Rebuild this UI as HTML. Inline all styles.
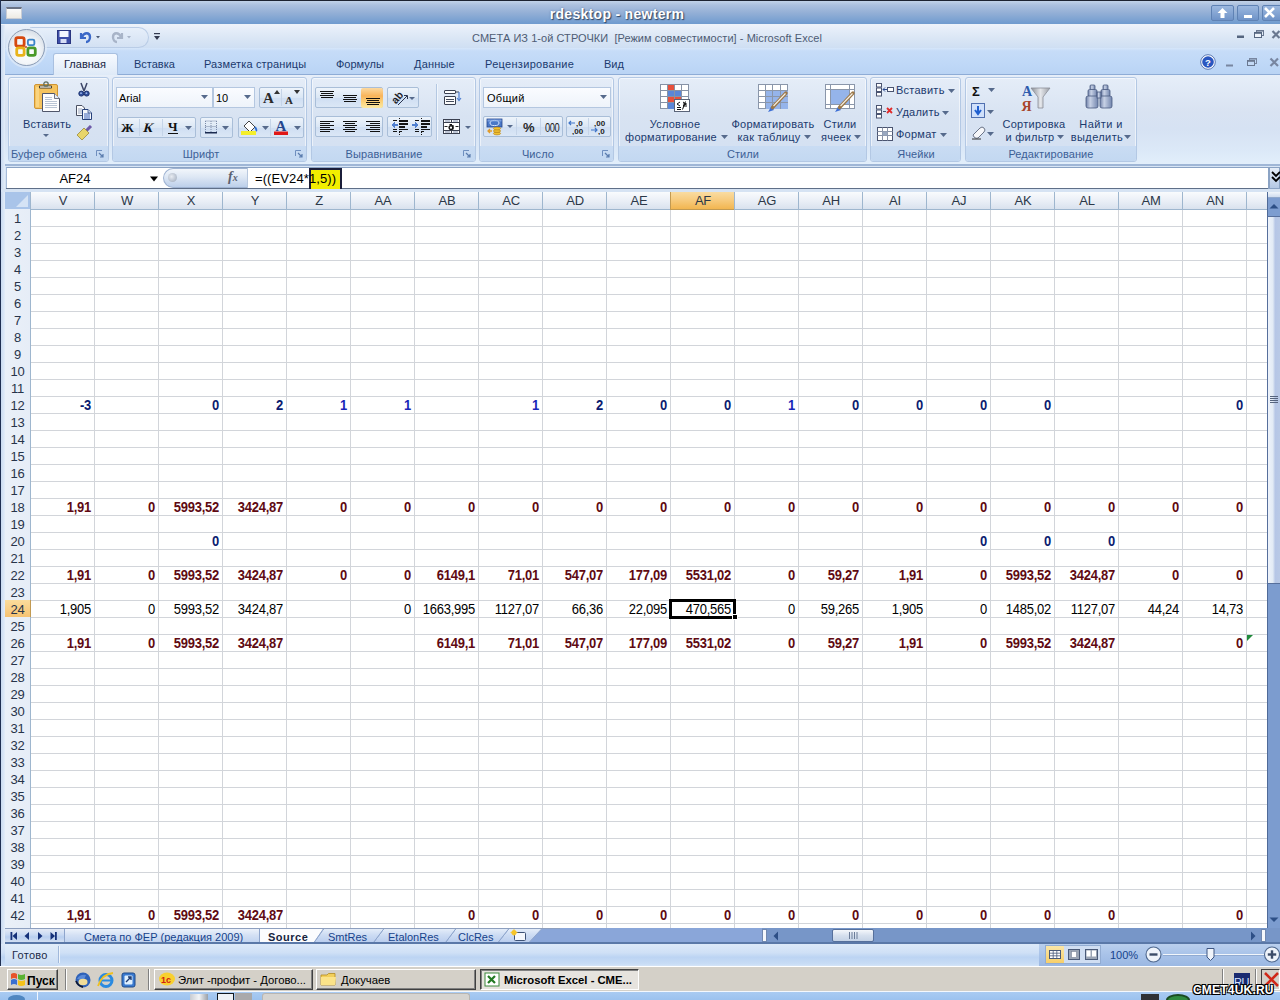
<!DOCTYPE html>
<html><head><meta charset="utf-8"><style>
*{margin:0;padding:0;box-sizing:border-box}
html,body{width:1280px;height:1000px;overflow:hidden;background:#fff;font-family:"Liberation Sans",sans-serif;position:relative}
.a{position:absolute}
.t{white-space:nowrap}
/* grid */
.vl{top:192px;width:1px;height:736px;background:#d2d5da}
.hl{left:31px;width:1236px;height:1px;background:#d2d5da}
.ch{top:192px;height:18px;background:linear-gradient(#f9fbfd,#e9eef6 55%,#d9e2ee);border-left:1px solid #9eb6ce;border-bottom:1px solid #9eb6ce;text-align:center;font-size:13px;line-height:17px;color:#2c3848;letter-spacing:-0.2px}
.ch.sel{background:linear-gradient(#f9dca2,#f7ca7c 50%,#f2b650);border-left-color:#c29a52;border-bottom-color:#c29a52}
.corner{left:5px;top:192px;width:26px;height:18px;background:#a9c4e9;border-right:1px solid #9eb6ce;border-bottom:1px solid #9eb6ce}
.corner .tri{position:absolute;right:2px;bottom:2px;width:0;height:0;border-left:12px solid transparent;border-bottom:12px solid #d5e3f5}
.rh{left:5px;width:26px;height:18px;background:linear-gradient(90deg,#eaf0f8,#e6edf7);border-right:1px solid #9eb6ce;border-bottom:1px solid #9eb6ce;text-align:center;font-size:13px;line-height:19px;color:#27344a;letter-spacing:-0.3px}
.rh.sel{background:linear-gradient(#fbdc9c,#f9d088 50%,#f6c272);border-right-color:#c29a52;border-bottom-color:#c29a52}
.cell{width:64px;height:17px;text-align:right;padding-right:3px;font-size:13px;line-height:19px;letter-spacing:-0.25px;color:#000;transform:scaleY(1.08);transform-origin:0 14px}
.cell.n{color:#0b1c70;font-weight:bold}
.cell.b{color:#1826b8;font-weight:bold}
.cell.r{color:#600a12;font-weight:bold}
.cell.k{color:#000}
.grp{top:77px;height:85px;border:1px solid #b3c8e4;border-radius:3px;background:linear-gradient(#e5edf8,#d8e3f2 45%,#d3e0f2);box-shadow:inset 0 0 0 1px rgba(255,255,255,.55)}
.glab{top:146px;height:15px;background:linear-gradient(#c9dcf3,#c3d8f1);border-radius:0 0 2px 2px}
.combo{background:linear-gradient(#fafcff,#eef3fa);border:1px solid #b4c7e0}
.btn{border:1px solid #a9bed8;border-radius:2px;background:linear-gradient(#eef4fb,#dbe7f5 50%,#cfdef2 51%,#dbe7f6)}

</style></head><body>
<!-- outer title bar -->
<div class="a" style="left:0;top:0;width:1280px;height:25px;background:linear-gradient(#1d2230 0,#1d2230 1px,#c2d2e8 1px,#acc0de 5px,#93afd6 13px,#6f9bcf 24px)"></div>
<div class="a t" style="left:317px;width:600px;text-align:center;top:7px;font-size:14px;line-height:14px;color:#fff;font-weight:bold;letter-spacing:0.3px;text-shadow:1px 1px 1px #2f4460,0 0 2px #5a78a8">rdesktop - newterm</div>
<div class="a" style="left:1211px;top:5px;width:23px;height:16px;border:1px solid #5f82b4;border-radius:2px;background:linear-gradient(#9cb8df,#6f93c8)"></div>
<div class="a" style="left:1237px;top:5px;width:22px;height:16px;border:1px solid #5f82b4;border-radius:2px;background:linear-gradient(#9cb8df,#6f93c8)"></div>
<div class="a" style="left:1262px;top:5px;width:22px;height:16px;border:1px solid #5f82b4;border-radius:2px;background:linear-gradient(#9cb8df,#6f93c8)"></div>
<svg class="a" style="left:1211px;top:5px" width="70" height="16" viewBox="0 0 70 16">
 <path d="M11.5 3 L6.5 8 H9.5 V13 H13.5 V8 H16.5 Z" fill="#fff"/>
 <rect x="33" y="10" width="8" height="3" fill="#fff"/>
 <path d="M54 3 L63 12 M63 3 L54 12" stroke="#fff" stroke-width="2.6"/>
</svg>
<!-- excel window frame -->
<div class="a" style="left:0;top:0;width:1px;height:991px;background:#1f2f52"></div>
<div class="a" style="left:1px;top:24px;width:1279px;height:24px;background:linear-gradient(#eef3fa,#e3ecf8 30%,#dae6f5 60%,#cfdff3)"></div>
<div class="a t" style="left:347px;width:600px;text-align:center;top:33px;font-size:11px;line-height:11px;color:#4e5c74;font-weight:normal;letter-spacing:0.05px;">СМЕТА ИЗ 1-ой СТРОЧКИ&nbsp; [Режим совместимости] - Microsoft Excel</div>
<!-- excel title window buttons -->
<svg class="a" style="left:1230px;top:28px" width="50" height="14" viewBox="0 0 50 14">
 <rect x="7" y="7.5" width="7" height="2.5" fill="#55657f"/>
 <rect x="26.5" y="2.5" width="7" height="5" fill="none" stroke="#6a7890" stroke-width="1"/><rect x="26" y="2" width="8" height="1.6" fill="#6a7890"/>
 <rect x="24.5" y="4.5" width="7" height="5" fill="#eef3fa" stroke="#55657f" stroke-width="1"/><rect x="24" y="4" width="8" height="1.8" fill="#55657f"/>
 <path d="M42.5 3 L49.5 10 M49.5 3 L42.5 10" stroke="#6a7890" stroke-width="2.2"/>
</svg>
<!-- tab row -->
<div class="a" style="left:1px;top:48px;width:1279px;height:27px;background:linear-gradient(#d6e6fa 0,#c6dcf8 3px,#bfd8f7 60%,#b9d3f4)"></div>
<div class="a" style="left:1px;top:74px;width:1279px;height:1px;background:#8eacd6"></div>
<!-- QAT -->
<div class="a" style="left:30px;top:27px;width:119px;height:21px;border-radius:0 11px 11px 0;background:linear-gradient(#e7effa,#d3e1f3);border:1px solid #b9cce6;border-left:none"></div>
<!-- office button -->
<div class="a" style="left:8px;top:29px;width:37px;height:37px;border-radius:50%;background:radial-gradient(circle at 50% 60%,#ffffff 0,#f3f6f9 45%,#d6dde6 80%,#b9c4d2 100%);border:1px solid #8d9db5;box-shadow:0 0 0 2px rgba(230,238,248,.6)"></div>
<svg class="a" style="left:13px;top:34px" width="26" height="26" viewBox="0 0 28 28">
 <rect x="3" y="4" width="9" height="9" rx="2" fill="none" stroke="#d5480f" stroke-width="3"/>
 <rect x="4" y="15" width="8" height="8" rx="2" fill="none" stroke="#e8b31a" stroke-width="3"/>
 <rect x="16" y="15" width="8" height="8" rx="2" fill="none" stroke="#4a9a2a" stroke-width="3"/>
 <rect x="16" y="6" width="7" height="6" rx="1.5" fill="none" stroke="#3c85c8" stroke-width="2"/>
 <circle cx="14" cy="14" r="1.2" fill="#c05030"/>
</svg>
<!-- save -->
<svg class="a" style="left:57px;top:30px" width="14" height="15" viewBox="0 0 14 15">
 <rect x="0.5" y="0.5" width="13" height="13" fill="#3e4ea8" stroke="#2a3580"/>
 <rect x="2.5" y="1" width="9" height="6" fill="#f4f6ff"/>
 <rect x="3.5" y="9" width="6" height="4" fill="#d8def5"/>
</svg>
<!-- undo -->
<svg class="a" style="left:78px;top:30px" width="24" height="14" viewBox="0 0 24 14">
 <path d="M3 3 V8 H8" fill="none" stroke="#3a68c8" stroke-width="2.2"/>
 <path d="M4 7 C6 2, 12 2, 12 7 C12 10, 10 12, 8 12" fill="none" stroke="#3a68c8" stroke-width="2.4"/>
 <path d="M18 6 L22 6 L20 8.5 Z" fill="#4a5a78"/>
</svg>
<svg class="a" style="left:110px;top:30px" width="24" height="14" viewBox="0 0 24 14">
 <path d="M12 3 V8 H7" fill="none" stroke="#a8b4c8" stroke-width="2.2"/>
 <path d="M11 7 C9 2, 3 2, 3 7 C3 10, 5 12, 7 12" fill="none" stroke="#a8b4c8" stroke-width="2.4"/>
 <path d="M17 6 L21 6 L19 8.5 Z" fill="#a8b4c8"/>
</svg>
<svg class="a" style="left:153px;top:32px" width="8" height="10" viewBox="0 0 8 10">
 <rect x="1" y="1" width="6" height="1.2" fill="#333a50"/>
 <path d="M1 4 L7 4 L4 8 Z" fill="#333a50"/>
</svg>
<!-- active tab -->
<div class="a" style="left:53px;top:53px;width:65px;height:23px;border:1px solid #a9c0e0;border-bottom:none;border-radius:3px 3px 0 0;background:linear-gradient(#f7faff,#e8f0fa 60%,#dde9f7)"></div>
<div class="a t" style="left:64px;top:59px;font-size:11px;line-height:11px;color:#15233e;font-weight:normal;letter-spacing:0px;">Главная</div>
<div class="a t" style="left:134px;top:59px;font-size:11px;line-height:11px;color:#1b3a6e;font-weight:normal;letter-spacing:0px;">Вставка</div>
<div class="a t" style="left:204px;top:59px;font-size:11px;line-height:11px;color:#1b3a6e;font-weight:normal;letter-spacing:0.15px;">Разметка страницы</div>
<div class="a t" style="left:336px;top:59px;font-size:11px;line-height:11px;color:#1b3a6e;font-weight:normal;letter-spacing:0px;">Формулы</div>
<div class="a t" style="left:414px;top:59px;font-size:11px;line-height:11px;color:#1b3a6e;font-weight:normal;letter-spacing:0.2px;">Данные</div>
<div class="a t" style="left:485px;top:59px;font-size:11px;line-height:11px;color:#1b3a6e;font-weight:normal;letter-spacing:0.3px;">Рецензирование</div>
<div class="a t" style="left:604px;top:59px;font-size:11px;line-height:11px;color:#1b3a6e;font-weight:normal;letter-spacing:0px;">Вид</div>
<!-- tab row right buttons -->
<svg class="a" style="left:1199px;top:53px" width="81" height="18" viewBox="0 0 81 18">
 <circle cx="9" cy="9" r="7.3" fill="#fff" stroke="#3a5aa0" stroke-width=".8"/>
 <circle cx="9" cy="9" r="5.8" fill="#2a56c0"/>
 <text x="9" y="12.6" font-size="9.5" font-weight="bold" fill="#fff" text-anchor="middle" font-family="Liberation Sans">?</text>
 <rect x="27" y="11.5" width="7" height="2" fill="#7886a0"/>
 <rect x="50.5" y="5.5" width="7" height="5" fill="none" stroke="#7886a0" stroke-width="1"/><rect x="50" y="5" width="8" height="1.6" fill="#7886a0"/>
 <rect x="48.5" y="7.5" width="7" height="5" fill="#c4daf6" stroke="#6a7890" stroke-width="1"/><rect x="48" y="7" width="8" height="1.8" fill="#6a7890"/>
 <path d="M71.5 5.5 L79 13 M79 5.5 L71.5 13" stroke="#7886a0" stroke-width="2.2"/>
</svg>
<!-- ribbon body -->
<div class="a" style="left:1px;top:75px;width:1279px;height:90px;background:linear-gradient(#e6eef9,#d9e3f2 40%,#d6e2f3 60%,#dce9f8 85%,#e3effb)"></div>
<div class="a" style="left:1px;top:164px;width:1279px;height:2px;background:#9fb6d6"></div>
<!-- groups -->
<div class="a grp" style="left:8px;width:101px"></div><div class="a glab" style="left:9px;width:99px"></div>
<div class="a grp" style="left:112px;width:195px"></div><div class="a glab" style="left:113px;width:193px"></div>
<div class="a grp" style="left:311px;width:165px"></div><div class="a glab" style="left:312px;width:163px"></div>
<div class="a grp" style="left:479px;width:135px"></div><div class="a glab" style="left:480px;width:133px"></div>
<div class="a grp" style="left:618px;width:249px"></div><div class="a glab" style="left:619px;width:247px"></div>
<div class="a grp" style="left:870px;width:91px"></div><div class="a glab" style="left:871px;width:89px"></div>
<div class="a grp" style="left:965px;width:172px"></div><div class="a glab" style="left:966px;width:170px"></div>
<div class="a t" style="left:-251px;width:600px;text-align:center;top:149px;font-size:11px;line-height:11px;color:#3c5f96;font-weight:normal;letter-spacing:0.1px;">Буфер обмена</div>
<div class="a t" style="left:-99px;width:600px;text-align:center;top:149px;font-size:11px;line-height:11px;color:#3c5f96;font-weight:normal;letter-spacing:0.1px;">Шрифт</div>
<div class="a t" style="left:84px;width:600px;text-align:center;top:149px;font-size:11px;line-height:11px;color:#3c5f96;font-weight:normal;letter-spacing:0.1px;">Выравнивание</div>
<div class="a t" style="left:238px;width:600px;text-align:center;top:149px;font-size:11px;line-height:11px;color:#3c5f96;font-weight:normal;letter-spacing:0.1px;">Число</div>
<div class="a t" style="left:443px;width:600px;text-align:center;top:149px;font-size:11px;line-height:11px;color:#3c5f96;font-weight:normal;letter-spacing:0.1px;">Стили</div>
<div class="a t" style="left:616px;width:600px;text-align:center;top:149px;font-size:11px;line-height:11px;color:#3c5f96;font-weight:normal;letter-spacing:0.1px;">Ячейки</div>
<div class="a t" style="left:751px;width:600px;text-align:center;top:149px;font-size:11px;line-height:11px;color:#3c5f96;font-weight:normal;letter-spacing:0.1px;">Редактирование</div>
<!-- launcher icons -->
<svg class="a" style="left:95px;top:149px" width="10" height="10" viewBox="0 0 10 10"><path d="M1.5 7 V1.5 H7" fill="none" stroke="#6f8fbf" stroke-width="1"/><path d="M4 4 L8 8 M8 5 V8 H5" fill="none" stroke="#5a7cae" stroke-width="1.2"/></svg>
<svg class="a" style="left:294px;top:149px" width="10" height="10" viewBox="0 0 10 10"><path d="M1.5 7 V1.5 H7" fill="none" stroke="#6f8fbf" stroke-width="1"/><path d="M4 4 L8 8 M8 5 V8 H5" fill="none" stroke="#5a7cae" stroke-width="1.2"/></svg>
<svg class="a" style="left:462px;top:149px" width="10" height="10" viewBox="0 0 10 10"><path d="M1.5 7 V1.5 H7" fill="none" stroke="#6f8fbf" stroke-width="1"/><path d="M4 4 L8 8 M8 5 V8 H5" fill="none" stroke="#5a7cae" stroke-width="1.2"/></svg>
<svg class="a" style="left:601px;top:149px" width="10" height="10" viewBox="0 0 10 10"><path d="M1.5 7 V1.5 H7" fill="none" stroke="#6f8fbf" stroke-width="1"/><path d="M4 4 L8 8 M8 5 V8 H5" fill="none" stroke="#5a7cae" stroke-width="1.2"/></svg>

<!-- CLIPBOARD -->
<svg class="a" style="left:28px;top:78px" width="70" height="66" viewBox="0 0 70 66">
 <rect x="6.5" y="6.5" width="23" height="24" rx="1.5" fill="#f5c35e" stroke="#cf9434" stroke-width="1"/>
 <rect x="8" y="9" width="3" height="20" fill="#fbd888" opacity=".8"/>
 <rect x="11" y="7.5" width="13" height="3" rx="1" fill="#3e3a30"/>
 <rect x="12" y="8.3" width="11" height="1.4" fill="#e8e4d8"/>
 <circle cx="18" cy="6" r="2.2" fill="none" stroke="#607060" stroke-width="1.3"/>
 <path d="M14.5 15.5 H26.5 L31.5 20.5 V33.5 H14.5 Z" fill="#fdfdfe" stroke="#50566a" stroke-width="1"/>
 <path d="M26.5 15.5 V20.5 H31.5" fill="#e8ecf2" stroke="#50566a" stroke-width=".8"/>
 <path d="M17 19.5 H24 M17 21.5 H24 M17 23.5 H29 M17 25.5 H29 M17 27.5 H29 M17 29.5 H29" stroke="#b9c4d4" stroke-width="1"/>
</svg>
<div class="a t" style="left:-253px;width:600px;text-align:center;top:119px;font-size:11px;line-height:11px;color:#1b3a6e;font-weight:normal;letter-spacing:0.2px;">Вставить</div>
<svg class="a" style="left:42px;top:133px" width="8" height="5" viewBox="0 0 8 5"><path d="M1 1 H7 L4 4 Z" fill="#566a8c"/></svg>
<svg class="a" style="left:77px;top:82px" width="14" height="16" viewBox="0 0 14 16">
 <path d="M4 1 L7 9 M10 1 L7 9" stroke="#3c4668" stroke-width="1.5"/>
 <circle cx="4.3" cy="11.6" r="2.5" fill="#2f4f9e" stroke="#1f3470" stroke-width="1"/>
 <circle cx="9.7" cy="11.6" r="2.5" fill="#2f4f9e" stroke="#1f3470" stroke-width="1"/>
 <circle cx="4" cy="11.2" r=".9" fill="#9fb8ea"/><circle cx="9.4" cy="11.2" r=".9" fill="#9fb8ea"/>
</svg>
<svg class="a" style="left:76px;top:104px" width="17" height="16" viewBox="0 0 17 16">
 <path d="M0.5 1.5 H6 L8.5 4 V11.5 H0.5 Z" fill="#fbfcfe" stroke="#4a5062" stroke-width="1"/>
 <path d="M2 5 H6 M2 7 H6 M2 9 H6" stroke="#9aa6bc" stroke-width="1"/>
 <path d="M6.5 5.5 H12 L15.5 9 V15.5 H6.5 Z" fill="#f4f7fc" stroke="#26407a" stroke-width="1"/>
 <path d="M8 10 H14 M8 12 H14 M8 14 H14" stroke="#3a62b8" stroke-width="1.1"/>
 <path d="M12 5.5 V9 H15.5" fill="#c8d6f0" stroke="#26407a" stroke-width=".7"/>
</svg>
<svg class="a" style="left:75px;top:125px" width="18" height="16" viewBox="0 0 18 16">
 <path d="M11 6 L16 1" stroke="#6d5aa8" stroke-width="3"/>
 <path d="M2 10 L9 3 L14 8 L7 15 Z" fill="#e8d56a" stroke="#9a8a3a" stroke-width="0.8"/>
</svg>

<!-- FONT -->
<div class="a combo" style="left:116px;top:87px;width:97px;height:21px"></div>
<div class="a t" style="left:119px;top:93px;font-size:11px;line-height:11px;color:#000;font-weight:normal;letter-spacing:0px;">Arial</div>
<svg class="a" style="left:201px;top:95px" width="7" height="4" viewBox="0 0 7 4"><path d="M0 0 H7 L3.5 4 Z" fill="#566a8c"/></svg>
<div class="a combo" style="left:213px;top:87px;width:42px;height:21px"></div>
<div class="a t" style="left:216px;top:93px;font-size:11px;line-height:11px;color:#000;font-weight:normal;letter-spacing:0px;">10</div>
<svg class="a" style="left:244px;top:95px" width="7" height="4" viewBox="0 0 7 4"><path d="M0 0 H7 L3.5 4 Z" fill="#566a8c"/></svg>
<div class="a btn" style="left:259px;top:87px;width:45px;height:21px"></div>
<div class="a" style="left:281px;top:89px;width:1px;height:17px;background:#c5d4e8"></div>
<div class="a t" style="left:263px;top:91px;font-size:15px;line-height:15px;color:#2a2a2a;font-weight:bold;letter-spacing:0px;font-family:'Liberation Serif',serif">A</div>
<svg class="a" style="left:274px;top:90px" width="6" height="4" viewBox="0 0 6 4"><path d="M0 4 L3 0 L6 4 Z" fill="#333"/></svg>
<div class="a t" style="left:285px;top:95px;font-size:11px;line-height:11px;color:#2a2a2a;font-weight:bold;letter-spacing:0px;font-family:'Liberation Serif',serif">A</div>
<svg class="a" style="left:294px;top:90px" width="6" height="4" viewBox="0 0 6 4"><path d="M0 0 H6 L3 4 Z" fill="#333"/></svg>

<div class="a btn" style="left:117px;top:117px;width:79px;height:21px"></div>
<div class="a" style="left:139px;top:119px;width:1px;height:17px;background:#c5d4e8"></div>
<div class="a" style="left:162px;top:119px;width:1px;height:17px;background:#c5d4e8"></div>
<div class="a t" style="left:121px;top:121px;font-size:13px;line-height:13px;color:#111;font-weight:bold;letter-spacing:0px;font-family:'Liberation Serif',serif">Ж</div>
<div class="a t" style="left:144px;top:121px;font-size:13px;line-height:13px;color:#111;font-weight:bold;letter-spacing:0px;font-family:'Liberation Serif',serif;transform:skewX(-15deg)">К</div>
<div class="a t" style="left:168px;top:120px;font-size:13px;line-height:13px;color:#111;font-weight:bold;letter-spacing:0px;font-family:'Liberation Serif',serif">Ч</div>
<div class="a" style="left:168px;top:133px;width:10px;height:1px;background:#111"></div>
<svg class="a" style="left:185px;top:126px" width="7" height="4" viewBox="0 0 7 4"><path d="M0 0 H7 L3.5 4 Z" fill="#566a8c"/></svg>
<div class="a btn" style="left:200px;top:117px;width:33px;height:21px"></div>
<svg class="a" style="left:204px;top:119px" width="14" height="16" viewBox="0 0 14 16">
 <path d="M1.5 2 V13 M12.5 2 V13 M1.5 2 H12.5 M1.5 7.5 H12.5 M7 2 V13" stroke="#7a8aa8" stroke-width="1" stroke-dasharray="1 1"/>
 <rect x="1" y="13" width="12" height="1.5" fill="#1a2a50"/>
</svg>
<svg class="a" style="left:222px;top:126px" width="7" height="4" viewBox="0 0 7 4"><path d="M0 0 H7 L3.5 4 Z" fill="#566a8c"/></svg>
<div class="a btn" style="left:238px;top:117px;width:66px;height:21px"></div>
<div class="a" style="left:270px;top:119px;width:1px;height:17px;background:#c5d4e8"></div>
<svg class="a" style="left:240px;top:118px" width="20" height="18" viewBox="0 0 20 18">
 <path d="M4 8 L9 3 L15 9 L10 14 Z" fill="#fff" stroke="#444" stroke-width="1"/>
 <path d="M15 9 Q17 12 16 13" stroke="#2f6fd0" stroke-width="2" fill="none"/>
 <rect x="1" y="13" width="15" height="4" fill="#f4ee2a"/>
</svg>
<svg class="a" style="left:262px;top:126px" width="7" height="4" viewBox="0 0 7 4"><path d="M0 0 H7 L3.5 4 Z" fill="#566a8c"/></svg>
<svg class="a" style="left:273px;top:118px" width="16" height="18" viewBox="0 0 16 18">
 <text x="8" y="12.5" font-size="15" font-weight="bold" fill="#26478e" text-anchor="middle" font-family="Liberation Serif">A</text>
 <rect x="1" y="13.5" width="14" height="3.5" fill="#e01818"/>
</svg>
<svg class="a" style="left:294px;top:126px" width="7" height="4" viewBox="0 0 7 4"><path d="M0 0 H7 L3.5 4 Z" fill="#566a8c"/></svg>

<!-- ALIGNMENT -->
<div class="a btn" style="left:315px;top:87px;width:68px;height:21px"></div>
<div class="a" style="left:361px;top:88px;width:22px;height:20px;background:linear-gradient(#fcd9a0,#f9b45a 40%,#fbd27c 70%,#fbe9a4);border-radius:2px"></div>
<svg class="a" style="left:314px;top:85px" width="70" height="55" viewBox="0 0 70 55" shape-rendering="crispEdges">
 <g fill="#111">
 <rect x="6" y="6" width="14" height="1"/><rect x="7" y="8" width="12" height="1"/><rect x="6" y="10" width="14" height="1"/><rect x="7" y="12" width="12" height="1"/>
 <rect x="29" y="10" width="14" height="1"/><rect x="30" y="12" width="12" height="1"/><rect x="29" y="14" width="14" height="1"/><rect x="30" y="16" width="12" height="1"/>
 <rect x="52" y="13" width="14" height="1"/><rect x="53" y="15" width="12" height="1"/><rect x="52" y="17" width="14" height="1"/><rect x="53" y="19" width="12" height="1"/>
 </g></svg>
<div class="a btn" style="left:387px;top:87px;width:32px;height:21px"></div>
<svg class="a" style="left:389px;top:89px" width="28" height="17" viewBox="0 0 28 17">
 <g transform="rotate(-50 8 8)"><text x="1.5" y="12" font-size="10.5" font-weight="bold" fill="#1e1e28" font-family="Liberation Sans">ab</text></g>
 <path d="M9 16 L18 7" stroke="#2a3450" stroke-width="1"/><path d="M15 6.5 L18.5 6.5 L18.5 10" fill="none" stroke="#2a3450" stroke-width="1"/>
 <path d="M20 8 H26 L23 11 Z" fill="#566a8c"/>
</svg>
<div class="a btn" style="left:315px;top:116px;width:68px;height:21px"></div>
<svg class="a" style="left:314px;top:85px" width="70" height="55" viewBox="0 0 70 55" shape-rendering="crispEdges">
 <g fill="#111">
 <rect x="6" y="36" width="14" height="1"/><rect x="6" y="38" width="10" height="1"/><rect x="6" y="40" width="14" height="1"/><rect x="6" y="42" width="10" height="1"/><rect x="6" y="44" width="14" height="1"/><rect x="6" y="46" width="10" height="1"/>
 <rect x="29" y="36" width="14" height="1"/><rect x="31" y="38" width="10" height="1"/><rect x="29" y="40" width="14" height="1"/><rect x="31" y="42" width="10" height="1"/><rect x="29" y="44" width="14" height="1"/><rect x="31" y="46" width="10" height="1"/>
 <rect x="52" y="36" width="14" height="1"/><rect x="56" y="38" width="10" height="1"/><rect x="52" y="40" width="14" height="1"/><rect x="56" y="42" width="10" height="1"/><rect x="52" y="44" width="14" height="1"/><rect x="56" y="46" width="10" height="1"/>
 </g></svg>
<div class="a btn" style="left:387px;top:116px;width:45px;height:21px"></div>
<svg class="a" style="left:388px;top:117px" width="44" height="19" viewBox="0 0 44 19" shape-rendering="crispEdges">
 <g fill="#141414"><rect x="11" y="1" width="1" height="1"/><rect x="11" y="17" width="1" height="1"/>
  <rect x="5" y="3" width="4" height="1"/><rect x="11" y="3" width="9" height="2"/>
  <rect x="11" y="6" width="9" height="2"/><rect x="11" y="9" width="6" height="2"/>
  <rect x="11" y="12" width="9" height="1"/><rect x="5" y="12" width="4" height="1"/>
  <rect x="5" y="14" width="4" height="1"/><rect x="11" y="14" width="3" height="1"/>
  <rect x="11" y="15" width="1" height="1"/><rect x="33" y="1" width="1" height="1"/><rect x="33" y="17" width="1" height="1"/>
  <rect x="27" y="3" width="4" height="1"/><rect x="33" y="3" width="9" height="2"/>
  <rect x="33" y="6" width="9" height="2"/><rect x="33" y="9" width="6" height="2"/>
  <rect x="33" y="12" width="9" height="1"/><rect x="27" y="12" width="4" height="1"/>
  <rect x="27" y="14" width="4" height="1"/><rect x="33" y="14" width="3" height="1"/>
  <rect x="33" y="15" width="1" height="1"/></g>
 <path d="M3 8 L7 5 V11 Z" fill="#4f7fd0"/><rect x="6" y="7" width="4" height="2" fill="#4f7fd0"/>
 <path d="M31 8 L27 5 V11 Z" fill="#4f7fd0"/><rect x="24" y="7" width="4" height="2" fill="#4f7fd0"/>
</svg>
<div class="a" style="left:436px;top:84px;width:1px;height:56px;background:#b4c8e2"></div>
<div class="a" style="left:437px;top:84px;width:1px;height:56px;background:#f0f6fd"></div>
<svg class="a" style="left:442px;top:88px" width="20" height="19" viewBox="0 0 20 19">
 <rect x="2.5" y="2.5" width="11" height="3" rx=".5" fill="#fff" stroke="#3a4050"/>
 <rect x="2.5" y="8.5" width="11" height="8" rx=".5" fill="#fbfbfb" stroke="#3a4050"/>
 <path d="M4 11.5 H12 M4 13.5 H12" stroke="#444c5c"/>
 <path d="M13.5 4 H17" stroke="#3a4050"/>
 <path d="M17 4 V12" stroke="#4f7fd0" stroke-width="1.2"/><path d="M15 10 L17 12.5 L19 10" stroke="#4f7fd0" fill="none" stroke-width="1.2"/>
</svg>
<svg class="a" style="left:442px;top:118px" width="30" height="18" viewBox="0 0 30 18">
 <rect x="1.5" y="1.5" width="16" height="14" fill="#fff" stroke="#3a4050"/>
 <path d="M1.5 4.5 H17.5 M1.5 12.5 H17.5 M9.5 1.5 V4.5 M9.5 12.5 V15.5" stroke="#3a4050"/>
 <path d="M3 3 H8 M11 3 H16 M3 14 H8 M11 14 H16" stroke="#8090b0"/>
 <circle cx="9" cy="9.6" r="1.9" fill="none" stroke="#111" stroke-width="1.4"/><path d="M10.9 7 V11.5 M7.5 6.6 H10" stroke="#111" stroke-width="1.3"/>
 <path d="M2.5 8.5 H5.5 M13.5 8.5 H16.5" stroke="#222" stroke-width="1.2"/>
 <path d="M23 8 H29 L26 11 Z" fill="#566a8c"/>
</svg>

<!-- NUMBER -->
<div class="a combo" style="left:483px;top:87px;width:128px;height:21px"></div>
<div class="a t" style="left:487px;top:93px;font-size:11px;line-height:11px;color:#000;font-weight:normal;letter-spacing:0.3px;">Общий</div>
<svg class="a" style="left:600px;top:95px" width="7" height="4" viewBox="0 0 7 4"><path d="M0 0 H7 L3.5 4 Z" fill="#566a8c"/></svg>
<div class="a btn" style="left:483px;top:116px;width:80px;height:21px"></div>
<div class="a" style="left:516px;top:118px;width:1px;height:17px;background:#c5d4e8"></div>
<div class="a" style="left:540px;top:118px;width:1px;height:17px;background:#c5d4e8"></div>
<svg class="a" style="left:486px;top:118px" width="30" height="18" viewBox="0 0 30 18">
 <rect x="1" y="1" width="15" height="8" fill="#4a78c8" stroke="#26468a" stroke-width=".8"/>
 <ellipse cx="8.5" cy="5" rx="4.5" ry="2.6" fill="none" stroke="#d8e6ff" stroke-width="1"/>
 <rect x="1.5" y="1.5" width="14" height="2" fill="#8fb0e8" opacity=".7"/>
 <g fill="#f2c232" stroke="#b07a10" stroke-width=".6">
 <ellipse cx="11" cy="15.5" rx="3.6" ry="1.4"/><ellipse cx="11" cy="13" rx="3.6" ry="1.4"/><ellipse cx="11" cy="10.5" rx="3.6" ry="1.4"/>
 </g>
 <path d="M2 13 H6 M4 11 L2 13 L4 15" stroke="#e09a28" stroke-width="1.3" fill="none"/>
 <path d="M21 7 H27 L24 10 Z" fill="#566a8c"/>
</svg>
<div class="a t" style="left:523px;top:121px;font-size:13px;line-height:13px;color:#2a2a2a;font-weight:normal;letter-spacing:0px;font-weight:600">%</div>
<div class="a t" style="left:545px;top:123px;font-size:11px;line-height:11px;color:#222;font-weight:normal;letter-spacing:-0.6px;transform:scale(0.85,1.15);transform-origin:0 100%">000</div>
<div class="a btn" style="left:566px;top:116px;width:45px;height:21px"></div>
<div class="a" style="left:588px;top:118px;width:1px;height:17px;background:#c5d4e8"></div>
<svg class="a" style="left:568px;top:118px" width="42" height="17" viewBox="0 0 42 17">
 <text x="8" y="8" font-size="8" font-weight="bold" fill="#222" font-family="Liberation Sans">,0</text>
 <text x="4" y="16" font-size="8" font-weight="bold" fill="#222" font-family="Liberation Sans">,00</text>
 <path d="M1 5 H7 M3 3 L1 5 L3 7" stroke="#3f74c8" stroke-width="1.2" fill="none"/>
 <text x="26" y="8" font-size="8" font-weight="bold" fill="#222" font-family="Liberation Sans">,00</text>
 <text x="30" y="16" font-size="8" font-weight="bold" fill="#222" font-family="Liberation Sans">,0</text>
 <path d="M23 12 H29 M27 10 L29 12 L27 14" stroke="#3f74c8" stroke-width="1.2" fill="none"/>
</svg>

<!-- STYLES -->
<svg class="a" style="left:660px;top:84px" width="32" height="30" viewBox="0 0 32 30" shape-rendering="crispEdges">
 <rect x="0.5" y="0.5" width="28" height="24" fill="#fff" stroke="#8792a6"/>
 <rect x="7.5" y="0.5" width="7" height="6" fill="#e8503c"/>
 <rect x="7.5" y="6.5" width="14" height="6" fill="#5a86d8"/>
 <rect x="7.5" y="12.5" width="14" height="6" fill="#e8503c"/>
 <rect x="7.5" y="18.5" width="7" height="6" fill="#5a86d8"/>
 <path d="M0.5 6.5 H28.5 M0.5 12.5 H28.5 M0.5 18.5 H28.5 M7.5 0.5 V24.5 M14.5 0.5 V24.5 M21.5 0.5 V24.5" stroke="#8792a6" fill="none"/>
 <rect x="14.5" y="15.5" width="15" height="12" fill="#fff" stroke="#5a6478"/>
 <path d="M20 18 L17 20 L20 22 M17 23.5 H21 M17 25.5 H21 M23 18 L26 20 L23 22 M22.5 25.5 L25.5 17.5 M23 20 H27 M23 22 H27" stroke="#111" stroke-width="1" fill="none" shape-rendering="auto"/>
</svg>
<div class="a t" style="left:375px;width:600px;text-align:center;top:119px;font-size:11px;line-height:11px;color:#1b3a6e;font-weight:normal;letter-spacing:0.25px;">Условное</div>
<div class="a t" style="left:371px;width:600px;text-align:center;top:132px;font-size:11px;line-height:11px;color:#1b3a6e;font-weight:normal;letter-spacing:0.25px;">форматирование</div>
<svg class="a" style="left:721px;top:135px" width="7" height="4" viewBox="0 0 7 4"><path d="M0 0 H7 L3.5 4 Z" fill="#566a8c"/></svg>
<svg class="a" style="left:758px;top:84px" width="34" height="30" viewBox="0 0 34 30">
 <g shape-rendering="crispEdges">
 <rect x="0.5" y="0.5" width="29" height="24" fill="#fff" stroke="#8a96aa"/>
 <rect x="7.5" y="6.5" width="22" height="18" fill="#95b4ea"/>
 <path d="M0.5 6.5 H29.5 M0.5 12.5 H29.5 M0.5 18.5 H29.5 M7.5 0.5 V24.5 M14.5 0.5 V24.5 M22.5 0.5 V24.5" stroke="#8a96aa" fill="none"/>
 </g>
 <path d="M10 28 L13 23 L16 26 Z" fill="#3d6fd6"/><path d="M12.5 24 Q14 21 17 22 L15.5 25.5 Z" fill="#4a7ad8"/>
 <path d="M14.5 23.5 L28 9" stroke="#9c7848" stroke-width="3.4" stroke-linecap="round"/>
 <path d="M15.5 22 L27.5 9.5" stroke="#f4f0e8" stroke-width="1.1"/>
</svg>
<div class="a t" style="left:473px;width:600px;text-align:center;top:119px;font-size:11px;line-height:11px;color:#1b3a6e;font-weight:normal;letter-spacing:0.25px;">Форматировать</div>
<div class="a t" style="left:469px;width:600px;text-align:center;top:132px;font-size:11px;line-height:11px;color:#1b3a6e;font-weight:normal;letter-spacing:0.25px;">как таблицу</div>
<svg class="a" style="left:804px;top:135px" width="7" height="4" viewBox="0 0 7 4"><path d="M0 0 H7 L3.5 4 Z" fill="#566a8c"/></svg>
<svg class="a" style="left:825px;top:84px" width="34" height="30" viewBox="0 0 34 30">
 <g shape-rendering="crispEdges">
 <rect x="0.5" y="0.5" width="29" height="24" fill="#fff" stroke="#8a96aa"/>
 <rect x="5.5" y="5.5" width="19" height="15" fill="#95b4ea" stroke="#8a96aa"/>
 <path d="M0.5 5.5 H5.5 M24.5 5.5 H29.5 M0.5 20.5 H5.5 M24.5 20.5 H29.5 M5.5 0.5 V5.5 M24.5 0.5 V5.5 M5.5 20.5 V24.5 M24.5 20.5 V24.5" stroke="#8a96aa"/>
 </g>
 <path d="M10 28 L13 23 L16 26 Z" fill="#3d6fd6"/><path d="M12.5 24 Q14 21 17 22 L15.5 25.5 Z" fill="#4a7ad8"/>
 <path d="M14.5 23.5 L28 9" stroke="#9c7848" stroke-width="3.4" stroke-linecap="round"/>
 <path d="M15.5 22 L27.5 9.5" stroke="#f4f0e8" stroke-width="1.1"/>
</svg>
<div class="a t" style="left:540px;width:600px;text-align:center;top:119px;font-size:11px;line-height:11px;color:#1b3a6e;font-weight:normal;letter-spacing:0.25px;">Стили</div>
<div class="a t" style="left:536px;width:600px;text-align:center;top:132px;font-size:11px;line-height:11px;color:#1b3a6e;font-weight:normal;letter-spacing:0.25px;">ячеек</div>
<svg class="a" style="left:854px;top:135px" width="7" height="4" viewBox="0 0 7 4"><path d="M0 0 H7 L3.5 4 Z" fill="#566a8c"/></svg>

<!-- CELLS -->
<svg class="a" style="left:875px;top:82px" width="20" height="16" viewBox="0 0 20 16">
 <rect x="1.5" y="1.5" width="5" height="3.5" fill="#fff" stroke="#4a5470"/>
 <rect x="1.5" y="6" width="5" height="3.5" fill="#fff" stroke="#4a5470"/>
 <rect x="1.5" y="10.5" width="5" height="3.5" fill="#fff" stroke="#4a5470"/>
 <path d="M8 7.5 H12 M10 5.5 L8 7.5 L10 9.5" stroke="#2a4a90" fill="none"/>
 <rect x="12.5" y="5.5" width="6" height="4" fill="#fff" stroke="#4a5470"/>
</svg>
<div class="a t" style="left:896px;top:85px;font-size:11px;line-height:11px;color:#1b3a6e;font-weight:normal;letter-spacing:0.25px;">Вставить</div>
<svg class="a" style="left:948px;top:89px" width="7" height="4" viewBox="0 0 7 4"><path d="M0 0 H7 L3.5 4 Z" fill="#566a8c"/></svg>
<svg class="a" style="left:875px;top:104px" width="20" height="16" viewBox="0 0 20 16">
 <rect x="1.5" y="1.5" width="5" height="3.5" fill="#fff" stroke="#4a5470"/>
 <rect x="1.5" y="6" width="5" height="3.5" fill="#fff" stroke="#4a5470"/>
 <rect x="1.5" y="10.5" width="5" height="3.5" fill="#fff" stroke="#4a5470"/>
 <path d="M8 7.5 H11" stroke="#4a5470"/>
 <path d="M12 4 L17 9 M17 4 L12 9" stroke="#e02a2a" stroke-width="1.8"/>
</svg>
<div class="a t" style="left:896px;top:107px;font-size:11px;line-height:11px;color:#1b3a6e;font-weight:normal;letter-spacing:0.25px;">Удалить</div>
<svg class="a" style="left:942px;top:111px" width="7" height="4" viewBox="0 0 7 4"><path d="M0 0 H7 L3.5 4 Z" fill="#566a8c"/></svg>
<svg class="a" style="left:876px;top:125px" width="18" height="17" viewBox="0 0 18 17">
 <rect x="1.5" y="2.5" width="15" height="13" fill="#fff" stroke="#4a5470"/>
 <path d="M1.5 6.5 H16.5 M1.5 10.5 H16.5 M6.5 2.5 V15.5 M11.5 2.5 V15.5" stroke="#8a94a8"/>
 <rect x="6.5" y="6.5" width="5" height="4" fill="#9aa8c0"/>
</svg>
<div class="a t" style="left:896px;top:129px;font-size:11px;line-height:11px;color:#1b3a6e;font-weight:normal;letter-spacing:0.25px;">Формат</div>
<svg class="a" style="left:940px;top:133px" width="7" height="4" viewBox="0 0 7 4"><path d="M0 0 H7 L3.5 4 Z" fill="#566a8c"/></svg>

<!-- EDITING -->
<div class="a t" style="left:972px;top:85px;font-size:13px;line-height:13px;color:#111;font-weight:bold;letter-spacing:0px;">Σ</div>
<svg class="a" style="left:988px;top:88px" width="7" height="4" viewBox="0 0 7 4"><path d="M0 0 H7 L3.5 4 Z" fill="#566a8c"/></svg>
<svg class="a" style="left:971px;top:103px" width="15" height="16" viewBox="0 0 15 16">
 <rect x="0.5" y="0.5" width="13" height="14" fill="#cfe0fb" stroke="#5070b0"/>
 <path d="M7 3 V10 M4 7 L7 11 L10 7" stroke="#1f5fd0" stroke-width="2" fill="none"/>
</svg>
<svg class="a" style="left:987px;top:110px" width="7" height="4" viewBox="0 0 7 4"><path d="M0 0 H7 L3.5 4 Z" fill="#566a8c"/></svg>
<svg class="a" style="left:971px;top:125px" width="16" height="15" viewBox="0 0 16 15">
 <path d="M2 10 L9 3 Q11 1 13 3 Q15 5 13 7 L7 13 Q5 14 3 12 Z" fill="#f6f7fa" stroke="#6a7488"/>
 <path d="M1 14 H10" stroke="#333"/>
</svg>
<svg class="a" style="left:987px;top:132px" width="7" height="4" viewBox="0 0 7 4"><path d="M0 0 H7 L3.5 4 Z" fill="#566a8c"/></svg>
<svg class="a" style="left:1016px;top:82px" width="36" height="30" viewBox="0 0 36 30">
 <defs><linearGradient id="fn" x1="0" y1="0" x2="1" y2="0"><stop offset="0" stop-color="#8a8e96"/><stop offset="0.5" stop-color="#e4e6ea"/><stop offset="1" stop-color="#9a9ea6"/></linearGradient></defs>
 <path d="M15 6 H34 L27 15 V26 H22 V15 Z" fill="url(#fn)" stroke="#8a8e98" stroke-width=".8"/>
 <text x="11" y="13.5" font-size="14" font-weight="bold" fill="#2f5cae" font-family="Liberation Serif" text-anchor="middle">A</text>
 <text x="10.5" y="29" font-size="14" font-weight="bold" fill="#a8442c" font-family="Liberation Serif" text-anchor="middle">Я</text>
</svg>
<div class="a t" style="left:734px;width:600px;text-align:center;top:119px;font-size:11px;line-height:11px;color:#1b3a6e;font-weight:normal;letter-spacing:0.25px;">Сортировка</div>
<div class="a t" style="left:730px;width:600px;text-align:center;top:132px;font-size:11px;line-height:11px;color:#1b3a6e;font-weight:normal;letter-spacing:0.25px;">и фильтр</div>
<svg class="a" style="left:1057px;top:135px" width="7" height="4" viewBox="0 0 7 4"><path d="M0 0 H7 L3.5 4 Z" fill="#566a8c"/></svg>
<svg class="a" style="left:1085px;top:84px" width="30" height="26" viewBox="0 0 30 26">
 <defs><linearGradient id="bn" x1="0" y1="0" x2="1" y2="0"><stop offset="0" stop-color="#6f80a8"/><stop offset="0.35" stop-color="#c8d2e6"/><stop offset="1" stop-color="#7386ae"/></linearGradient></defs>
 <g stroke="#4a5a80" stroke-width=".8" fill="url(#bn)">
 <rect x="5" y="1" width="5" height="5" rx="1"/><rect x="18" y="1" width="5" height="5" rx="1"/>
 <rect x="3" y="5.5" width="9" height="7" rx="1.5"/><rect x="16" y="5.5" width="9" height="7" rx="1.5"/>
 <rect x="1" y="12" width="12" height="12" rx="2"/><rect x="15" y="12" width="12" height="12" rx="2"/>
 <rect x="12" y="8" width="4" height="6"/>
 </g>
</svg>
<div class="a t" style="left:801px;width:600px;text-align:center;top:119px;font-size:11px;line-height:11px;color:#1b3a6e;font-weight:normal;letter-spacing:0.4px;">Найти и</div>
<div class="a t" style="left:797px;width:600px;text-align:center;top:132px;font-size:11px;line-height:11px;color:#1b3a6e;font-weight:normal;letter-spacing:0.4px;">выделить</div>
<svg class="a" style="left:1124px;top:135px" width="7" height="4" viewBox="0 0 7 4"><path d="M0 0 H7 L3.5 4 Z" fill="#566a8c"/></svg>

<!-- formula bar -->
<div class="a" style="left:1px;top:166px;width:1279px;height:26px;background:linear-gradient(#d9e6f5,#cfdff2)"></div>
<div class="a" style="left:6px;top:167px;width:1263px;height:22px;background:#fff;border:1px solid #8ba3c4;border-left-color:#a6bbd9"></div>
<div class="a" style="left:6px;top:188px;width:1262px;height:1px;background:#5f6f88"></div>
<div class="a t" style="left:-225px;width:600px;text-align:center;top:172px;font-size:13px;line-height:13px;color:#000;font-weight:normal;letter-spacing:0px;">AF24</div>
<svg class="a" style="left:149px;top:175px" width="10" height="8" viewBox="0 0 10 8"><path d="M1 1.5 L9 1.5 L5 6.5 Z" fill="#000"/></svg>
<div class="a" style="left:163px;top:168px;width:85px;height:20px;border-radius:10px 0 0 10px;background:linear-gradient(#f2f6fb,#dde7f4 45%,#bccfea);border:1px solid #9fb3d2;border-right:none"></div>
<div class="a" style="left:168px;top:173px;width:9px;height:9px;border-radius:50%;background:radial-gradient(circle at 40% 40%,#e8ecf2,#9aa6b8)"></div>
<div class="a t" style="left:228px;top:170px;font-family:'Liberation Serif',serif;font-style:italic;font-weight:bold;font-size:14px;line-height:14px;color:#5a6070">f<span style="font-size:10px">x</span></div>
<div class="a" style="left:247px;top:168px;width:1px;height:20px;background:#b8c8de"></div>
<div class="a" style="left:309px;top:168px;width:33px;height:24px;background:#f2ee00;border:2px solid #1b1e3a"></div>
<div class="a t" style="left:255px;top:172px;font-size:13px;line-height:13px;color:#000;font-weight:normal;letter-spacing:0.1px;">=((EV24*1,5))</div>
<div class="a" style="left:1269px;top:167px;width:11px;height:22px;background:linear-gradient(#e5edf8,#b4c8e4);border:1px solid #8ba3c4"></div>
<svg class="a" style="left:1271px;top:171px" width="10" height="12" viewBox="0 0 10 12"><path d="M1 1 L5 5 L9 1 M1 6 L5 10 L9 6" fill="none" stroke="#000" stroke-width="1.8"/></svg>
<div class="a" style="left:1px;top:25px;width:4px;height:940px;background:linear-gradient(90deg,#c9daf0,#e3edf9)"></div>
<div class="a" style="left:1px;top:189px;width:1279px;height:3px;background:#d6e3f3"></div>

<div class="a" style="left:5px;top:192px;width:1262px;height:736px;background:#fff"></div>
<div class="a vl" style="left:94px"></div>
<div class="a vl" style="left:158px"></div>
<div class="a vl" style="left:222px"></div>
<div class="a vl" style="left:286px"></div>
<div class="a vl" style="left:350px"></div>
<div class="a vl" style="left:414px"></div>
<div class="a vl" style="left:478px"></div>
<div class="a vl" style="left:542px"></div>
<div class="a vl" style="left:606px"></div>
<div class="a vl" style="left:670px"></div>
<div class="a vl" style="left:734px"></div>
<div class="a vl" style="left:798px"></div>
<div class="a vl" style="left:862px"></div>
<div class="a vl" style="left:926px"></div>
<div class="a vl" style="left:990px"></div>
<div class="a vl" style="left:1054px"></div>
<div class="a vl" style="left:1118px"></div>
<div class="a vl" style="left:1182px"></div>
<div class="a vl" style="left:1246px"></div>
<div class="a hl" style="top:226px"></div>
<div class="a hl" style="top:243px"></div>
<div class="a hl" style="top:260px"></div>
<div class="a hl" style="top:277px"></div>
<div class="a hl" style="top:294px"></div>
<div class="a hl" style="top:311px"></div>
<div class="a hl" style="top:328px"></div>
<div class="a hl" style="top:345px"></div>
<div class="a hl" style="top:362px"></div>
<div class="a hl" style="top:379px"></div>
<div class="a hl" style="top:396px"></div>
<div class="a hl" style="top:413px"></div>
<div class="a hl" style="top:430px"></div>
<div class="a hl" style="top:447px"></div>
<div class="a hl" style="top:464px"></div>
<div class="a hl" style="top:481px"></div>
<div class="a hl" style="top:498px"></div>
<div class="a hl" style="top:515px"></div>
<div class="a hl" style="top:532px"></div>
<div class="a hl" style="top:549px"></div>
<div class="a hl" style="top:566px"></div>
<div class="a hl" style="top:583px"></div>
<div class="a hl" style="top:600px"></div>
<div class="a hl" style="top:617px"></div>
<div class="a hl" style="top:634px"></div>
<div class="a hl" style="top:651px"></div>
<div class="a hl" style="top:668px"></div>
<div class="a hl" style="top:685px"></div>
<div class="a hl" style="top:702px"></div>
<div class="a hl" style="top:719px"></div>
<div class="a hl" style="top:736px"></div>
<div class="a hl" style="top:753px"></div>
<div class="a hl" style="top:770px"></div>
<div class="a hl" style="top:787px"></div>
<div class="a hl" style="top:804px"></div>
<div class="a hl" style="top:821px"></div>
<div class="a hl" style="top:838px"></div>
<div class="a hl" style="top:855px"></div>
<div class="a hl" style="top:872px"></div>
<div class="a hl" style="top:889px"></div>
<div class="a hl" style="top:906px"></div>
<div class="a hl" style="top:923px"></div>
<div class="a ch" style="left:30px;width:65px">V</div>
<div class="a ch" style="left:94px;width:65px">W</div>
<div class="a ch" style="left:158px;width:65px">X</div>
<div class="a ch" style="left:222px;width:65px">Y</div>
<div class="a ch" style="left:286px;width:65px">Z</div>
<div class="a ch" style="left:350px;width:65px">AA</div>
<div class="a ch" style="left:414px;width:65px">AB</div>
<div class="a ch" style="left:478px;width:65px">AC</div>
<div class="a ch" style="left:542px;width:65px">AD</div>
<div class="a ch" style="left:606px;width:65px">AE</div>
<div class="a ch sel" style="left:670px;width:65px">AF</div>
<div class="a ch" style="left:734px;width:65px">AG</div>
<div class="a ch" style="left:798px;width:65px">AH</div>
<div class="a ch" style="left:862px;width:65px">AI</div>
<div class="a ch" style="left:926px;width:65px">AJ</div>
<div class="a ch" style="left:990px;width:65px">AK</div>
<div class="a ch" style="left:1054px;width:65px">AL</div>
<div class="a ch" style="left:1118px;width:65px">AM</div>
<div class="a ch" style="left:1182px;width:65px">AN</div>
<div class="a ch" style="left:1246px;width:65px">AO</div>
<div class="a corner"><div class="tri"></div></div>
<div class="a rh" style="top:209px">1</div>
<div class="a rh" style="top:226px">2</div>
<div class="a rh" style="top:243px">3</div>
<div class="a rh" style="top:260px">4</div>
<div class="a rh" style="top:277px">5</div>
<div class="a rh" style="top:294px">6</div>
<div class="a rh" style="top:311px">7</div>
<div class="a rh" style="top:328px">8</div>
<div class="a rh" style="top:345px">9</div>
<div class="a rh" style="top:362px">10</div>
<div class="a rh" style="top:379px">11</div>
<div class="a rh" style="top:396px">12</div>
<div class="a rh" style="top:413px">13</div>
<div class="a rh" style="top:430px">14</div>
<div class="a rh" style="top:447px">15</div>
<div class="a rh" style="top:464px">16</div>
<div class="a rh" style="top:481px">17</div>
<div class="a rh" style="top:498px">18</div>
<div class="a rh" style="top:515px">19</div>
<div class="a rh" style="top:532px">20</div>
<div class="a rh" style="top:549px">21</div>
<div class="a rh" style="top:566px">22</div>
<div class="a rh" style="top:583px">23</div>
<div class="a rh sel" style="top:600px">24</div>
<div class="a rh" style="top:617px">25</div>
<div class="a rh" style="top:634px">26</div>
<div class="a rh" style="top:651px">27</div>
<div class="a rh" style="top:668px">28</div>
<div class="a rh" style="top:685px">29</div>
<div class="a rh" style="top:702px">30</div>
<div class="a rh" style="top:719px">31</div>
<div class="a rh" style="top:736px">32</div>
<div class="a rh" style="top:753px">33</div>
<div class="a rh" style="top:770px">34</div>
<div class="a rh" style="top:787px">35</div>
<div class="a rh" style="top:804px">36</div>
<div class="a rh" style="top:821px">37</div>
<div class="a rh" style="top:838px">38</div>
<div class="a rh" style="top:855px">39</div>
<div class="a rh" style="top:872px">40</div>
<div class="a rh" style="top:889px">41</div>
<div class="a rh" style="top:906px">42</div>
<div class="a rh" style="top:923px">43</div>
<div class="a cell n" style="left:30px;top:396px">-3</div>
<div class="a cell n" style="left:158px;top:396px">0</div>
<div class="a cell n" style="left:222px;top:396px">2</div>
<div class="a cell b" style="left:286px;top:396px">1</div>
<div class="a cell b" style="left:350px;top:396px">1</div>
<div class="a cell b" style="left:478px;top:396px">1</div>
<div class="a cell n" style="left:542px;top:396px">2</div>
<div class="a cell n" style="left:606px;top:396px">0</div>
<div class="a cell n" style="left:670px;top:396px">0</div>
<div class="a cell b" style="left:734px;top:396px">1</div>
<div class="a cell n" style="left:798px;top:396px">0</div>
<div class="a cell n" style="left:862px;top:396px">0</div>
<div class="a cell n" style="left:926px;top:396px">0</div>
<div class="a cell n" style="left:990px;top:396px">0</div>
<div class="a cell n" style="left:1182px;top:396px">0</div>
<div class="a cell r" style="left:30px;top:498px">1,91</div>
<div class="a cell r" style="left:94px;top:498px">0</div>
<div class="a cell r" style="left:158px;top:498px">5993,52</div>
<div class="a cell r" style="left:222px;top:498px">3424,87</div>
<div class="a cell r" style="left:286px;top:498px">0</div>
<div class="a cell r" style="left:350px;top:498px">0</div>
<div class="a cell r" style="left:414px;top:498px">0</div>
<div class="a cell r" style="left:478px;top:498px">0</div>
<div class="a cell r" style="left:542px;top:498px">0</div>
<div class="a cell r" style="left:606px;top:498px">0</div>
<div class="a cell r" style="left:670px;top:498px">0</div>
<div class="a cell r" style="left:734px;top:498px">0</div>
<div class="a cell r" style="left:798px;top:498px">0</div>
<div class="a cell r" style="left:862px;top:498px">0</div>
<div class="a cell r" style="left:926px;top:498px">0</div>
<div class="a cell r" style="left:990px;top:498px">0</div>
<div class="a cell r" style="left:1054px;top:498px">0</div>
<div class="a cell r" style="left:1118px;top:498px">0</div>
<div class="a cell r" style="left:1182px;top:498px">0</div>
<div class="a cell n" style="left:158px;top:532px">0</div>
<div class="a cell n" style="left:926px;top:532px">0</div>
<div class="a cell n" style="left:990px;top:532px">0</div>
<div class="a cell n" style="left:1054px;top:532px">0</div>
<div class="a cell r" style="left:30px;top:566px">1,91</div>
<div class="a cell r" style="left:94px;top:566px">0</div>
<div class="a cell r" style="left:158px;top:566px">5993,52</div>
<div class="a cell r" style="left:222px;top:566px">3424,87</div>
<div class="a cell r" style="left:286px;top:566px">0</div>
<div class="a cell r" style="left:350px;top:566px">0</div>
<div class="a cell r" style="left:414px;top:566px">6149,1</div>
<div class="a cell r" style="left:478px;top:566px">71,01</div>
<div class="a cell r" style="left:542px;top:566px">547,07</div>
<div class="a cell r" style="left:606px;top:566px">177,09</div>
<div class="a cell r" style="left:670px;top:566px">5531,02</div>
<div class="a cell r" style="left:734px;top:566px">0</div>
<div class="a cell r" style="left:798px;top:566px">59,27</div>
<div class="a cell r" style="left:862px;top:566px">1,91</div>
<div class="a cell r" style="left:926px;top:566px">0</div>
<div class="a cell r" style="left:990px;top:566px">5993,52</div>
<div class="a cell r" style="left:1054px;top:566px">3424,87</div>
<div class="a cell r" style="left:1118px;top:566px">0</div>
<div class="a cell r" style="left:1182px;top:566px">0</div>
<div class="a cell k" style="left:30px;top:600px">1,905</div>
<div class="a cell k" style="left:94px;top:600px">0</div>
<div class="a cell k" style="left:158px;top:600px">5993,52</div>
<div class="a cell k" style="left:222px;top:600px">3424,87</div>
<div class="a cell k" style="left:350px;top:600px">0</div>
<div class="a cell k" style="left:414px;top:600px">1663,995</div>
<div class="a cell k" style="left:478px;top:600px">1127,07</div>
<div class="a cell k" style="left:542px;top:600px">66,36</div>
<div class="a cell k" style="left:606px;top:600px">22,095</div>
<div class="a cell k" style="left:670px;top:600px">470,565</div>
<div class="a cell k" style="left:734px;top:600px">0</div>
<div class="a cell k" style="left:798px;top:600px">59,265</div>
<div class="a cell k" style="left:862px;top:600px">1,905</div>
<div class="a cell k" style="left:926px;top:600px">0</div>
<div class="a cell k" style="left:990px;top:600px">1485,02</div>
<div class="a cell k" style="left:1054px;top:600px">1127,07</div>
<div class="a cell k" style="left:1118px;top:600px">44,24</div>
<div class="a cell k" style="left:1182px;top:600px">14,73</div>
<div class="a cell r" style="left:30px;top:634px">1,91</div>
<div class="a cell r" style="left:94px;top:634px">0</div>
<div class="a cell r" style="left:158px;top:634px">5993,52</div>
<div class="a cell r" style="left:222px;top:634px">3424,87</div>
<div class="a cell r" style="left:414px;top:634px">6149,1</div>
<div class="a cell r" style="left:478px;top:634px">71,01</div>
<div class="a cell r" style="left:542px;top:634px">547,07</div>
<div class="a cell r" style="left:606px;top:634px">177,09</div>
<div class="a cell r" style="left:670px;top:634px">5531,02</div>
<div class="a cell r" style="left:734px;top:634px">0</div>
<div class="a cell r" style="left:798px;top:634px">59,27</div>
<div class="a cell r" style="left:862px;top:634px">1,91</div>
<div class="a cell r" style="left:926px;top:634px">0</div>
<div class="a cell r" style="left:990px;top:634px">5993,52</div>
<div class="a cell r" style="left:1054px;top:634px">3424,87</div>
<div class="a cell r" style="left:1182px;top:634px">0</div>
<div class="a cell r" style="left:30px;top:906px">1,91</div>
<div class="a cell r" style="left:94px;top:906px">0</div>
<div class="a cell r" style="left:158px;top:906px">5993,52</div>
<div class="a cell r" style="left:222px;top:906px">3424,87</div>
<div class="a cell r" style="left:414px;top:906px">0</div>
<div class="a cell r" style="left:478px;top:906px">0</div>
<div class="a cell r" style="left:542px;top:906px">0</div>
<div class="a cell r" style="left:606px;top:906px">0</div>
<div class="a cell r" style="left:670px;top:906px">0</div>
<div class="a cell r" style="left:734px;top:906px">0</div>
<div class="a cell r" style="left:798px;top:906px">0</div>
<div class="a cell r" style="left:862px;top:906px">0</div>
<div class="a cell r" style="left:926px;top:906px">0</div>
<div class="a cell r" style="left:990px;top:906px">0</div>
<div class="a cell r" style="left:1054px;top:906px">0</div>
<div class="a cell r" style="left:1182px;top:906px">0</div>
<!-- vertical scrollbar -->
<div class="a" style="left:1267px;top:192px;width:13px;height:752px;background:#7c9ccf;border-left:1px solid #4f6a98"></div>
<div class="a" style="left:1268px;top:192px;width:12px;height:6px;background:linear-gradient(#f0f5fb,#cfdcef);border-bottom:1px solid #90a8cc"></div>
<div class="a" style="left:1268px;top:198px;width:12px;height:18px;background:#7d9dd0"></div>
<svg class="a" style="left:1268px;top:201px" width="12" height="10" viewBox="0 0 12 10"><path d="M1.5 7.5 L6 3 L10.5 7.5 Z" fill="#2d4f86"/></svg>
<div class="a" style="left:1267px;top:216px;width:13px;height:368px;background:linear-gradient(90deg,#eef3fb,#e3ebf5 40%,#b6c6e6 60%,#b9c9e6);border:1px solid #566f9c;border-right:none"></div>
<svg class="a" style="left:1269px;top:395px" width="10" height="9" viewBox="0 0 10 9"><path d="M1 1.5 H9 M1 3.5 H9 M1 5.5 H9 M1 7.5 H9" stroke="#56647e" stroke-width="1"/></svg>
<svg class="a" style="left:1268px;top:915px" width="12" height="10" viewBox="0 0 12 10"><path d="M1.5 2.5 L6 7 L10.5 2.5 Z" fill="#2d4f86"/></svg>
<!-- sheet tab bar -->
<div class="a" style="left:5px;top:928px;width:1275px;height:16px;background:#8aa6d9"></div>
<div class="a" style="left:762px;top:928px;width:518px;height:16px;background:#7796c8"></div>
<div class="a" style="left:5px;top:928px;width:59px;height:15px;background:linear-gradient(#e9edf6,#c9daf3 45%,#b8cff0 60%,#d8e2f2)"></div>
<svg class="a" style="left:8px;top:930px" width="52" height="12" viewBox="0 0 52 12">
 <rect x="2.5" y="2" width="1.8" height="8" fill="#15317a"/><path d="M4.5 6 L9 2 L9 10 Z" fill="#15317a"/>
 <path d="M16.5 6 L21 2 L21 10 Z" fill="#15317a"/>
 <path d="M34.5 6 L30 2 L30 10 Z" fill="#15317a"/>
 <path d="M47 6 L42.5 2 L42.5 10 Z" fill="#15317a"/><rect x="47" y="2" width="1.8" height="8" fill="#15317a"/>
</svg>
<svg class="a" style="left:0px;top:928px" width="560" height="16" viewBox="0 0 560 16">
 <defs>
  <linearGradient id="tg" x1="0" y1="0" x2="0" y2="1"><stop offset="0" stop-color="#eef3fb"/><stop offset="0.5" stop-color="#d3e0f4"/><stop offset="1" stop-color="#c0d3f0"/></linearGradient>
  <linearGradient id="tg2" x1="0" y1="0" x2="0" y2="1"><stop offset="0" stop-color="#e6eef9"/><stop offset="0.45" stop-color="#cddcf3"/><stop offset="1" stop-color="#b9cdee"/></linearGradient>
 </defs>
 <path d="M509 0.5 L542 0.5 L529 14.5 L498 14.5 Z" fill="url(#tg2)" stroke="#8ea5cc" stroke-width="1"/>
 <path d="M456 0.5 L509 0.5 L498 14.5 L445.5 14.5 Z" fill="url(#tg2)" stroke="#8ea5cc" stroke-width="1"/>
 <path d="M384 0.5 L456 0.5 L445.5 14.5 L373.5 14.5 Z" fill="url(#tg2)" stroke="#8ea5cc" stroke-width="1"/>
 <path d="M324 0.5 L384 0.5 L373.5 14.5 L314 14.5 Z" fill="url(#tg2)" stroke="#8ea5cc" stroke-width="1"/>
 <path d="M64.5 0.5 L259.5 0.5 L259.5 14.5 L64.5 14.5 Z" fill="url(#tg)" stroke="#8ea5cc" stroke-width="1"/>
 <path d="M259.5 0 L324 0 L314 14.5 L259.5 14.5 Z" fill="#fbfcfe" stroke="#8ea5cc" stroke-width="1"/>
 <path d="M5 0.5 H560" stroke="#8d9fbf" stroke-width="1"/>
</svg>
<div class="a t" style="left:84px;top:932px;font-size:11px;line-height:11px;color:#15428b;font-weight:0.25;letter-spacing:0px;">Смета по ФЕР (редакция 2009)</div>
<div class="a t" style="left:268px;top:932px;font-size:11px;line-height:11px;color:#15233e;font-weight:bold;letter-spacing:0.5px;">Source</div>
<div class="a t" style="left:328px;top:932px;font-size:11px;line-height:11px;color:#15428b;font-weight:0.15;letter-spacing:0px;">SmtRes</div>
<div class="a t" style="left:388px;top:932px;font-size:11px;line-height:11px;color:#15428b;font-weight:0.15;letter-spacing:0px;">EtalonRes</div>
<div class="a t" style="left:458px;top:932px;font-size:11px;line-height:11px;color:#15428b;font-weight:0.15;letter-spacing:0px;">ClcRes</div>
<svg class="a" style="left:510px;top:929px" width="18" height="13" viewBox="0 0 18 13"><rect x="4.5" y="3.5" width="11" height="8" rx="1" fill="#f4f7fc" stroke="#3e5276"/><circle cx="4" cy="3.5" r="2.6" fill="#f5c428"/><path d="M4 0 V7 M0.5 3.5 H7.5" stroke="#f5c428" stroke-width="0.8"/></svg>
<div class="a" style="left:5px;top:942px;width:1275px;height:2px;background:#5a78a8"></div>
<!-- h scroll -->
<div class="a" style="left:762px;top:929px;width:5px;height:13px;background:#f5f8fc;border:1px solid #7088b0"></div>
<svg class="a" style="left:771px;top:930px" width="10" height="12" viewBox="0 0 10 12"><path d="M7 1.5 L2.5 6 L7 10.5 Z" fill="#2d4f86"/></svg>
<div class="a" style="left:832px;top:929px;width:42px;height:13px;border-radius:2px;background:linear-gradient(#f4f7fb,#d6e0ee 50%,#c4d2e6);border:1px solid #56709c"></div>
<svg class="a" style="left:847px;top:932px" width="12" height="8" viewBox="0 0 12 8"><path d="M2.5 0 V7 M5 0 V7 M7.5 0 V7 M10 0 V7" stroke="#6b7c98" stroke-width="1"/></svg>
<svg class="a" style="left:1248px;top:930px" width="10" height="12" viewBox="0 0 10 12"><path d="M3 1.5 L7.5 6 L3 10.5 Z" fill="#2d4f86"/></svg>
<div class="a" style="left:1261px;top:929px;width:5px;height:13px;background:#f5f8fc;border:1px solid #7088b0"></div>
<!-- status bar -->
<div class="a" style="left:1px;top:944px;width:1279px;height:22px;background:linear-gradient(#dce9f9,#cfe0f6 40%,#bcd4f3 60%,#c8dcf5 90%,#d4e4f8)"></div><div class="a" style="left:5px;top:944px;width:53px;height:22px;background:linear-gradient(#e2edf9,#d6e5f7 50%,#c9dcf4)"></div>
<div class="a t" style="left:12px;top:950px;font-size:11px;line-height:11px;color:#1b2a48;font-weight:normal;letter-spacing:0.3px;">Готово</div>
<div class="a" style="left:58px;top:946px;width:1px;height:17px;background:#a0b8da"></div>
<div class="a" style="left:59px;top:946px;width:1px;height:17px;background:#eef4fb"></div>
<div class="a" style="left:1039px;top:944px;width:241px;height:22px;background:linear-gradient(#b9cfee,#a8c2e8 50%,#9bb8e3)"></div>
<div class="a" style="left:1045px;top:945px;width:56px;height:19px;border:1px solid #92acd2;background:#d0def2"></div>
<div class="a" style="left:1046px;top:946px;width:18px;height:17px;background:linear-gradient(#fbe6a7,#f7cf6a)"></div>
<svg class="a" style="left:1046px;top:946px" width="56" height="17" viewBox="0 0 56 17">
 <rect x="3.5" y="4.5" width="11" height="8" fill="#fff" stroke="#4a5a78"/>
 <path d="M3.5 7.2 H14.5 M3.5 9.8 H14.5 M7.2 4.5 V12.5 M10.8 4.5 V12.5" stroke="#4a5a78" stroke-width="0.8"/>
 <rect x="22.5" y="3.5" width="11" height="10" fill="#9aa4b4" stroke="#4a5a78"/>
 <rect x="25.5" y="5.5" width="5" height="6" fill="#fff" stroke="#7a8498" stroke-width=".6"/>
 <rect x="39.5" y="3.5" width="12" height="10" fill="#9aa4b4" stroke="#4a5a78"/>
 <rect x="40.5" y="4.5" width="4" height="6" fill="#fff"/><rect x="46" y="4.5" width="4" height="6" fill="#fff"/>
</svg>
<div class="a t" style="left:1110px;top:950px;font-size:11px;line-height:11px;color:#15428b;font-weight:normal;letter-spacing:0px;">100%</div>
<svg class="a" style="left:1143px;top:944px" width="137" height="21" viewBox="0 0 137 21">
 <circle cx="10.5" cy="10.5" r="7.5" fill="#eef3fa" stroke="#50698f" stroke-width="1.1"/>
 <rect x="6.5" y="9.3" width="8" height="2.4" fill="#3c4c68"/>
 <path d="M20 10.5 H126" stroke="#f2f6fb" stroke-width="1.2"/>
 <path d="M20 11.5 H126" stroke="#8aa4cc" stroke-width="0.8"/>
 <path d="M64 4.5 H71 V13 L67.5 16.5 L64 13 Z" fill="#f0f4fa" stroke="#3e5682" stroke-width="1"/>
 <circle cx="129" cy="10.5" r="7.5" fill="#eef3fa" stroke="#50698f" stroke-width="1.1"/>
 <rect x="124.8" y="9.3" width="8.4" height="2.4" fill="#3c4c68"/><rect x="127.8" y="6.3" width="2.4" height="8.4" fill="#3c4c68"/>
</svg>
<!-- taskbar -->
<div class="a" style="left:0;top:966px;width:1280px;height:1px;background:#fff"></div>
<div class="a" style="left:0;top:967px;width:1280px;height:24px;background:#d4d0c8"></div>
<div class="a" style="left:7px;top:969px;width:51px;height:21px;background:#d4d0c8;border:1px solid;border-color:#fff #404040 #404040 #fff;box-shadow:inset -1px -1px #808080"></div>
<svg class="a" style="left:10px;top:972px" width="16" height="15" viewBox="0 0 16 15">
 <path d="M1 2 Q4 0 7 2 V7 Q4 5 1 7 Z" fill="#e8542a"/>
 <path d="M8 2 Q11 4 15 2 V7 Q11 9 8 7 Z" fill="#5ab232"/>
 <path d="M1 8 Q4 6 7 8 V13 Q4 11 1 13 Z" fill="#3a6fd0"/>
 <path d="M8 8 Q11 10 15 8 V13 Q11 15 8 13 Z" fill="#f5c21a"/>
</svg>
<div class="a t" style="left:27px;top:975px;font-size:12px;line-height:12px;color:#000;font-weight:bold;letter-spacing:0px;">Пуск</div>
<div class="a" style="left:65px;top:969px;width:2px;height:21px;border-left:1px solid #808080;border-right:1px solid #fff"></div>
<svg class="a" style="left:74px;top:971px" width="66" height="18" viewBox="0 0 66 18">
 <circle cx="9" cy="9" r="7.5" fill="#2f62b8"/><path d="M3 8 Q6 3 12 4 L10 9 Z" fill="#5a8ad8"/>
 <ellipse cx="9" cy="11" rx="4.5" ry="3.2" fill="#f0dc98"/><path d="M2 10 Q4 15 9 16" stroke="#101830" stroke-width="1.8" fill="none"/>
 <circle cx="32" cy="9.5" r="6" fill="none" stroke="#2a8ae0" stroke-width="3"/><path d="M27 9.5 H37" stroke="#2a8ae0" stroke-width="2"/>
 <path d="M24 15 Q28 3 39 2" stroke="#f0c020" stroke-width="1.8" fill="none"/>
 <rect x="48" y="2" width="13" height="14" rx="2" fill="#3a7ad0" stroke="#1f4a8a"/><rect x="50.5" y="4.5" width="8" height="9" rx="1" fill="#dff0ff"/>
 <path d="M52 11 L57 6 M54 6 H57 V9" stroke="#1f3a70" stroke-width="1.4" fill="none"/>
</svg>
<div class="a" style="left:148px;top:969px;width:2px;height:21px;border-left:1px solid #808080;border-right:1px solid #fff"></div>
<div class="a" style="left:154px;top:969px;width:159px;height:21px;background:#d4d0c8;border:1px solid;border-color:#fff #404040 #404040 #fff;box-shadow:inset -1px -1px #808080"></div>
<svg class="a" style="left:158px;top:971px" width="18" height="16" viewBox="0 0 18 16"><ellipse cx="9" cy="8" rx="8" ry="6.5" fill="#f8d030"/><text x="3" y="12" font-size="9" font-weight="bold" fill="#d02010" font-family="Liberation Sans">1c</text></svg>
<div class="a t" style="left:178px;top:975px;font-size:11.3px;line-height:11.3px;color:#000;font-weight:normal;letter-spacing:0px;">Элит -профит - Догово...</div>
<div class="a" style="left:316px;top:969px;width:160px;height:21px;background:#d4d0c8;border:1px solid;border-color:#fff #404040 #404040 #fff;box-shadow:inset -1px -1px #808080"></div>
<svg class="a" style="left:320px;top:972px" width="18" height="15" viewBox="0 0 18 15"><path d="M1 3 H7 L8.5 1.5 H15 V13 H1 Z" fill="#f2cf5a" stroke="#b48a20" stroke-width=".8"/><path d="M1 5 H16 L15 13 H1 Z" fill="#fbe389"/></svg>
<div class="a t" style="left:341px;top:975px;font-size:11.3px;line-height:11.3px;color:#000;font-weight:normal;letter-spacing:0px;">Докучаев</div>
<div class="a" style="left:480px;top:969px;width:159px;height:21px;background:#e6e3de;border:1px solid;border-color:#404040 #fff #fff #404040;box-shadow:inset 1px 1px #808080"></div>
<svg class="a" style="left:484px;top:972px" width="17" height="15" viewBox="0 0 17 15"><rect x="1" y="1" width="14" height="13" fill="#fff" stroke="#3c8a3c"/><path d="M4 4 L11 11 M11 4 L4 11" stroke="#237a23" stroke-width="2.2"/></svg>
<div class="a t" style="left:504px;top:975px;font-size:11.3px;line-height:11.3px;color:#000;font-weight:bold;letter-spacing:0px;">Microsoft Excel - СМЕ...</div>
<div class="a" style="left:1222px;top:969px;width:2px;height:21px;border-left:1px solid #808080;border-right:1px solid #fff"></div>
<div class="a" style="left:1234px;top:973px;width:16px;height:17px;background:#1a2a70"></div><div class="a" style="left:1255px;top:969px;width:2px;height:21px;border-left:1px solid #808080;border-right:1px solid #fff"></div>
<div class="a t" style="left:1234px;top:977px;font-size:11px;line-height:11px;color:#d8e4ff;font-weight:normal;letter-spacing:-0.5px;">RU</div>
<div class="a" style="left:1261px;top:969px;width:19px;height:21px;border:1px solid;border-color:#404040 #fff #fff #404040"></div>
<svg class="a" style="left:1263px;top:971px" width="17" height="17" viewBox="0 0 17 17"><path d="M2 2 L15 15 M15 2 L2 15" stroke="#d02818" stroke-width="2.5"/></svg>
<!-- bottom strip -->
<div class="a" style="left:0;top:991px;width:1280px;height:9px;background:linear-gradient(#f4f8fd 0,#f4f8fd 1px,#a9cbf2 1px,#9cc2ef)"></div>
<div class="a" style="left:8px;top:995px;width:17px;height:8px;border-radius:50%;background:#4f86c0"></div>
<div class="a" style="left:37px;top:992px;width:1px;height:8px;background:#f0f6ff"></div>
<div class="a" style="left:190px;top:994px;width:18px;height:6px;background:linear-gradient(90deg,#c8ccd2,#f2f4f6,#9aa0a8)"></div>
<div class="a" style="left:217px;top:993px;width:17px;height:7px;background:#eef2f6;border:1px solid #101820;border-bottom:none"></div>
<div class="a" style="left:235px;top:993px;width:17px;height:7px;background:#a9a9ab"></div>
<div class="a" style="left:262px;top:993px;width:208px;height:7px;background:#d6d4d0;border:1px solid #b8b6b2;border-bottom:none;border-radius:3px 3px 0 0"></div>
<div class="a" style="left:1141px;top:994px;width:18px;height:6px;background:#303236"></div>
<div class="a" style="left:1166px;top:994px;width:24px;height:12px;border-radius:50%;background:#2e8a3e;border:2px solid #1a4a22"></div>
<div class="a t" style="left:1193px;top:984px;font-size:12px;line-height:12px;color:#fff;font-weight:bold;letter-spacing:0.2px;text-shadow:-1px -1px 0 #000,1px -1px 0 #000,-1px 1px 0 #000,1px 1px 0 #000">CMET4UK.RU</div>
<!-- selection -->
<div class="a" style="left:669px;top:599px;width:67px;height:20px;border:3px solid #000"></div>
<div class="a" style="left:732px;top:614px;width:6px;height:6px;background:#000;border:1px solid #fff"></div>
<svg class="a" style="left:1247px;top:635px" width="6" height="6" viewBox="0 0 6 6"><path d="M0 0 H6 L0 6 Z" fill="#1f8a3a"/></svg>
<!-- rdesktop icon -->
<div class="a" style="left:6px;top:7px;width:16px;height:12px;background:linear-gradient(#fbfbfb,#eeebe4);border:1px solid #c8ccd4;border-top:2px solid #6a7284"></div>

</body></html>
